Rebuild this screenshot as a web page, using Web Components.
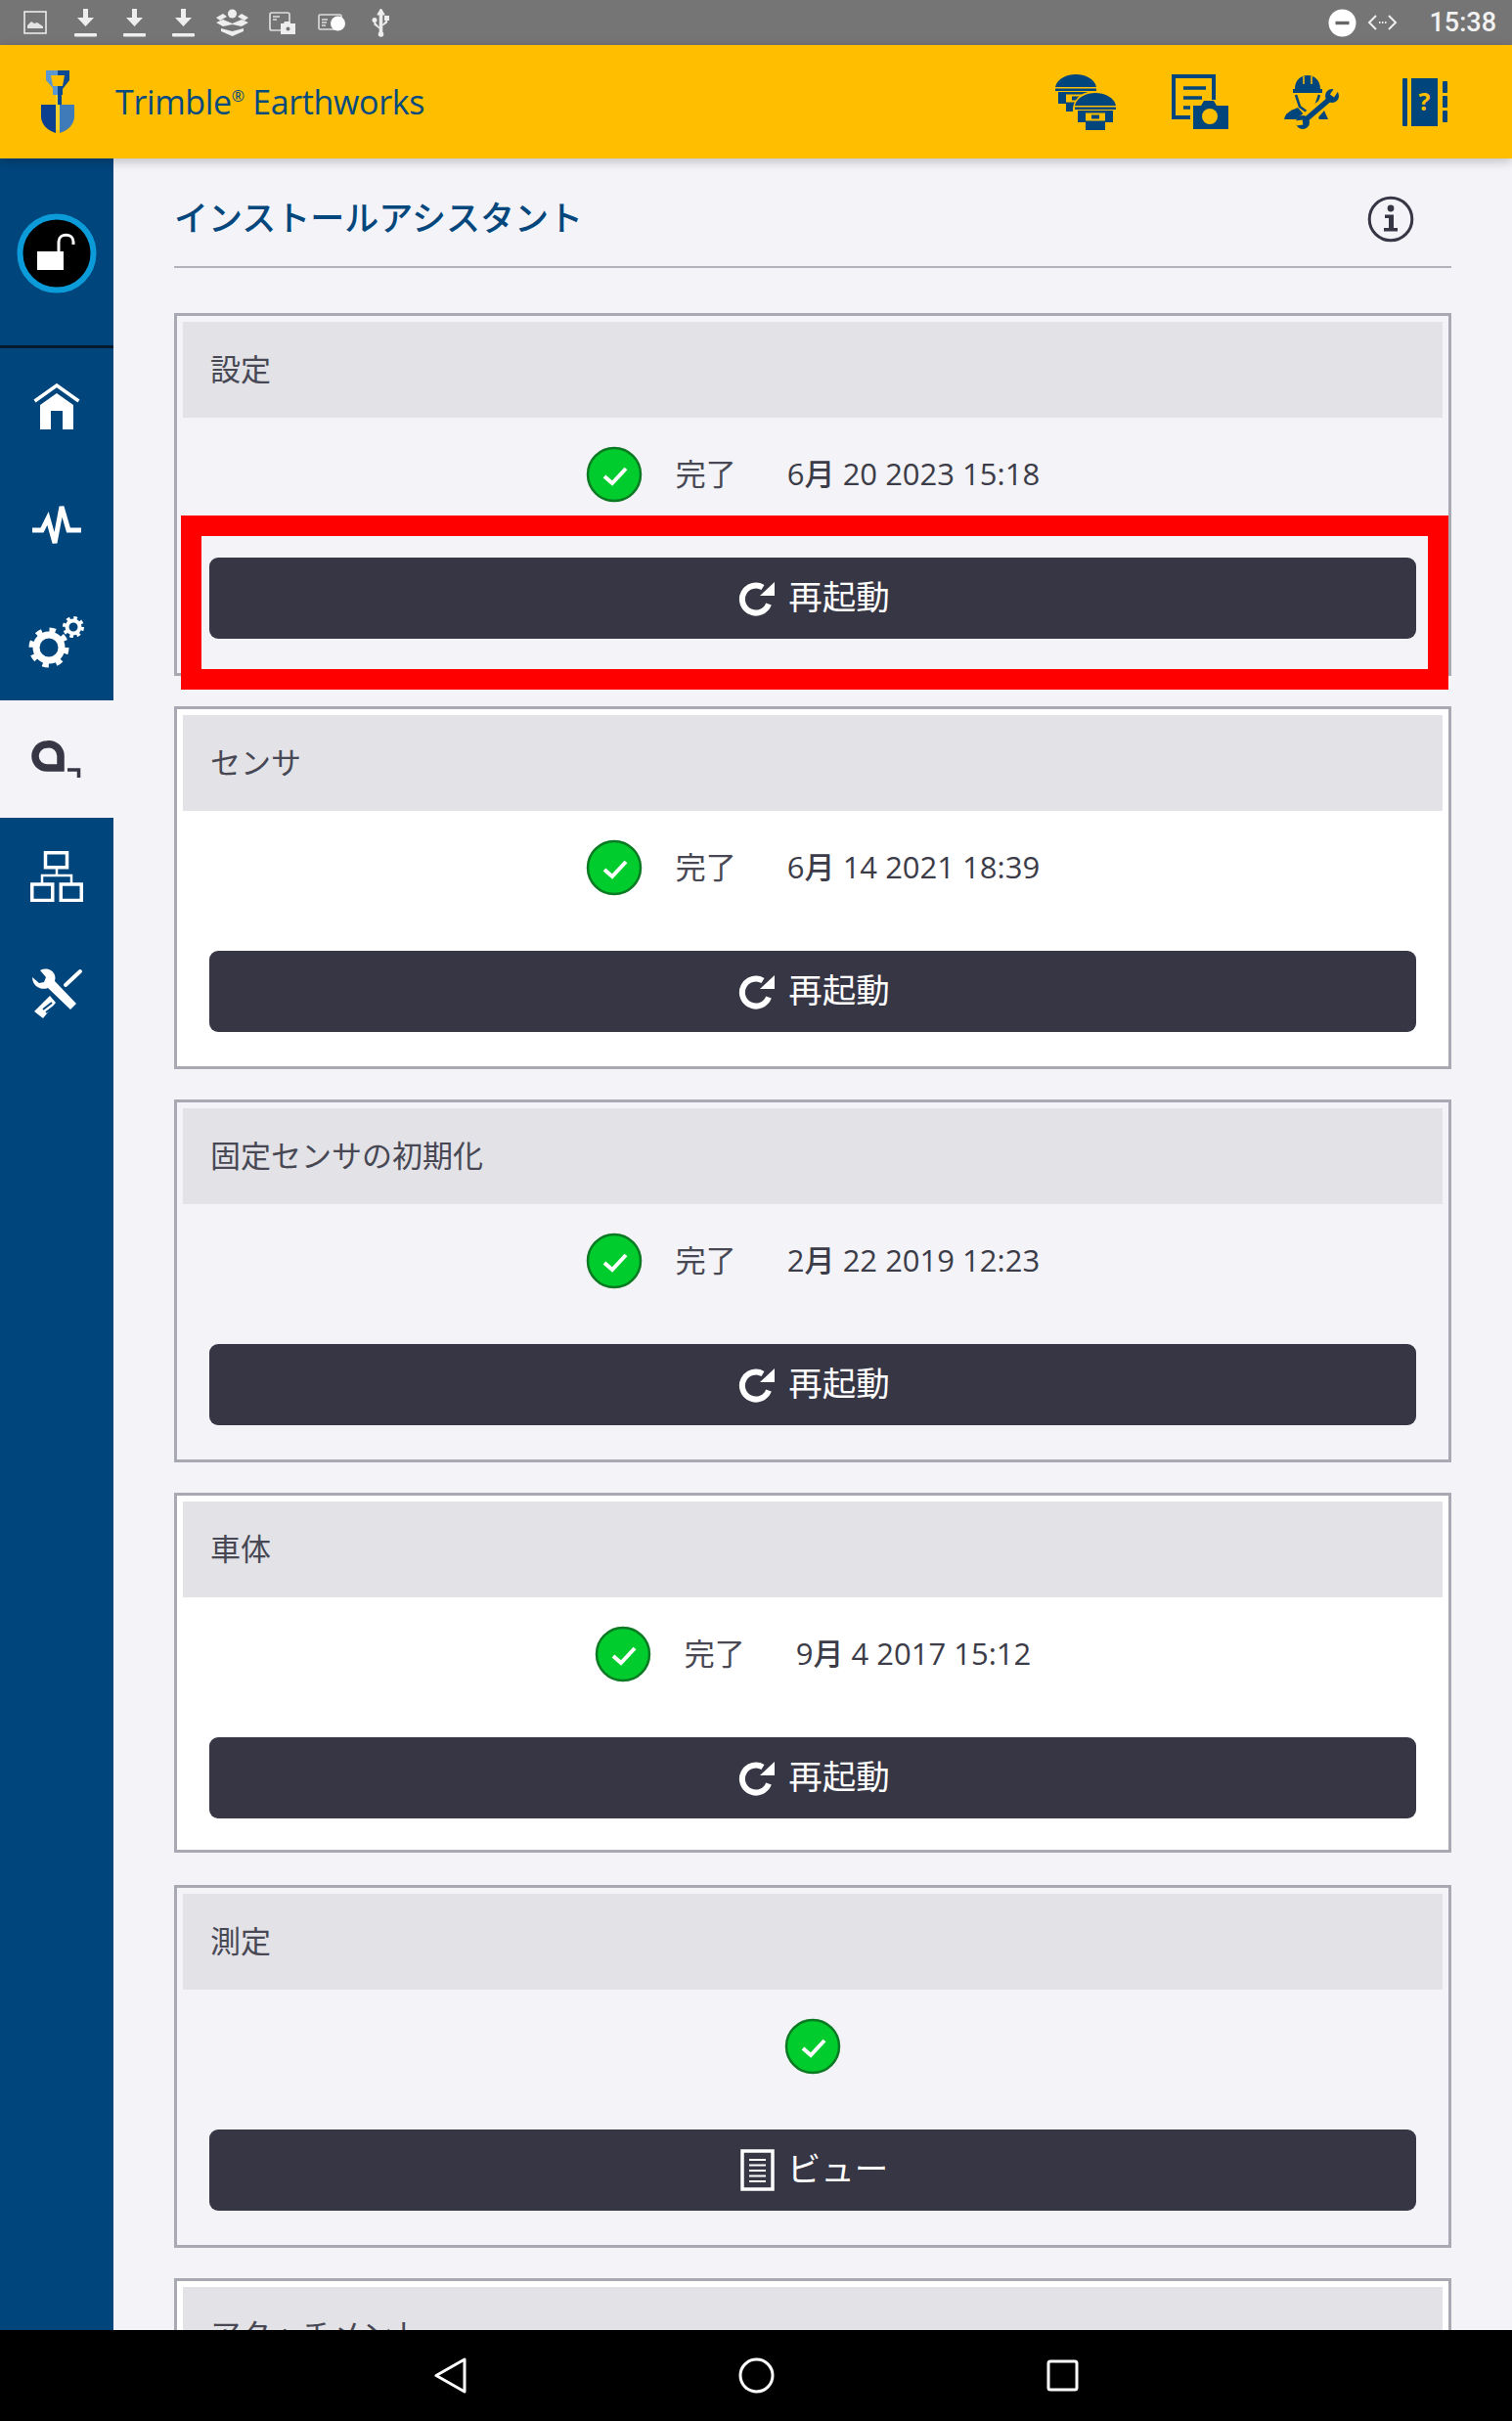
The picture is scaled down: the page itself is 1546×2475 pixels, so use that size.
<!DOCTYPE html>
<html lang="ja">
<head>
<meta charset="utf-8">
<title>Trimble Earthworks</title>
<style>
    html, body { margin: 0; height: 100%; background: #f3f3f8; }
    body {
        display: flex;
        flex-direction: column;
        height: 2475px;
        overflow: hidden;
        font-family: "Open Sans", "Noto Sans CJK JP", sans-serif;
    }
    .middle { flex: 1; display: flex; min-height: 0; }
</style>
</head>
<body>
<status-bar></status-bar>
<app-header></app-header>
<div class="middle">
    <side-rail></side-rail>
    <assistant-page>
        <install-card title="設定" date="6月 20 2023 15:18" action="再起動" highlight></install-card>
        <install-card title="センサ" date="6月 14 2021 18:39" action="再起動" white></install-card>
        <install-card title="固定センサの初期化" date="2月 22 2019 12:23" action="再起動"></install-card>
        <install-card title="車体" date="9月 4 2017 15:12" action="再起動" white short></install-card>
        <install-card title="測定" action="ビュー" icon="view"></install-card>
        <install-card title="アタッチメント" white></install-card>
    </assistant-page>
</div>
<nav-bar></nav-bar>

<script>
const BLUE = '#00457c';
const DARK = '#373645';
const YELLOW = '#ffbf00';

// rover drawn at the origin, 42 wide by 38 high
const rover = `
    <path d="M0 13C2 4 12 0 21 0s19 4 21 13z"/>
    <rect y="14.500" width="42" height="2.500"/>
    <path d="M3 18h36v12h-8v8H11v-8H3z"/>
    <rect x="11" y="20.500" width="20" height="8" fill="${YELLOW}"/>
    <rect x="17" y="22.500" width="8" height="4"/>`;

const ICONS = {
    image: `<svg width="24" height="24" viewBox="0 0 24 24"><rect x="1" y="1" width="22" height="22" fill="none" stroke="#e4e4e4" stroke-width="1.700"/><path d="M4 18v-3l4-4 3 2 3-1 3 2 3 2v2z" fill="#e4e4e4"/></svg>`,
    download: `<svg width="23" height="29" viewBox="0 0 23 29" fill="#eee"><path d="M9 0h5v9h6l-8.500 9L3 9h6z"/><rect y="25" width="23" height="3.500" rx="1"/></svg>`,
    box: `<svg width="33" height="28" viewBox="0 0 33 28" fill="#eee"><circle cx="16.500" cy="5" r="4.500"/><path d="M0 9l7-4 4 3-7 4zM33 9l-7-4-4 3 7 4zM0 14l7-3 9.500 4 9.500-4 7 3-7 4-9.500-2-9.500 2z"/><path d="M5 20l11.500 3L28 20v3l-11.500 5L5 23z"/></svg>`,
    shot: `<svg width="27" height="23" viewBox="0 0 27 23"><rect x="1" y="1" width="20" height="18" rx="2" fill="none" stroke="#ddd" stroke-width="1.700"/><path d="M4 5h7M4 8h4" stroke="#ddd" stroke-width="1.500"/><path d="M12 12h3l1-2h5l1 2h5v11H12z" fill="#eee"/><circle cx="19.500" cy="17.500" r="2" fill="#777"/></svg>`,
    record: `<svg width="28" height="21" viewBox="0 0 28 21"><rect x="1" y="2" width="23" height="15" rx="1.500" fill="none" stroke="#ddd" stroke-width="1.600"/><path d="M4 7h6M4 10h5M4 13h4" stroke="#ddd" stroke-width="1.500"/><circle cx="20.500" cy="11" r="7.500" fill="#fff"/></svg>`,
    usb: `<svg width="21" height="29" viewBox="0 0 21 29"><path d="M10.500 0l3.500 6h-2.300v18h-2.400V6H7zM10.500 21L4 16v-3M10.500 18l6-4v-3" fill="#eee" stroke="#eee" stroke-width="1.200" stroke-linejoin="round"/><circle cx="10.500" cy="26" r="2.800" fill="#eee"/><circle cx="4" cy="11.500" r="2.500" fill="#eee"/><rect x="14" y="7" width="5" height="5" fill="#eee"/></svg>`,
    dnd: `<svg width="29" height="29" viewBox="0 0 29 29"><circle cx="14.500" cy="14.500" r="14" fill="#fff"/><rect x="7.500" y="12.800" width="14" height="3.400" fill="#666"/></svg>`,
    code: `<svg width="31" height="20" viewBox="0 0 31 20" fill="none" stroke="#eee" stroke-width="2"><path d="M9 3l-7 7 7 7M22 3l7 7-7 7"/><path d="M12 10h1.500M15 10h1.500M18 10h1.500"/></svg>`,
    shovel: `<svg width="34" height="66" viewBox="0 0 34 66"><path d="M5 1h12v5h-7l2 11h5v9H12v-7L5 11z" fill="#5c97cf"/><path d="M17 1h12v10l-7 9v6h-5v-9h5l2-11h-7z" fill="#0b4a93"/><path d="M0 36h15v29C6 62 0 56 0 48z" fill="#0b3f8f"/><path d="M19 36h15v12c0 8-6 14-15 17z" fill="#3f7bb8"/><rect x="15" y="26" width="4" height="36" fill="#f3cf2b"/><path d="M17 26h4v10h-4z" fill="#0b4a93"/></svg>`,
    rovers: `<svg width="62" height="57" viewBox="0 0 62 57" fill="${BLUE}"><g>${rover}</g><g transform="translate(20 19)"><path d="M-2 15C0 3 11-2 21-2s21 5 23 17v17H-2z" fill="${YELLOW}"/>${rover}</g></svg>`,
    doccam: `<svg width="58" height="56" viewBox="0 0 58 56"><path d="M19 44H2V2h41v24" fill="none" stroke="${BLUE}" stroke-width="4"/><path d="M12 14h23M12 24h19M12 34h7" stroke="${BLUE}" stroke-width="3.500"/><path d="M22 32h8l3-5h10l3 5h12v24H22z" fill="${BLUE}"/><circle cx="39" cy="43" r="8" fill="${YELLOW}"/></svg>`,
    worker: `<svg width="56" height="56" viewBox="0 0 56 56"><path d="M11 15C11 6 17 1 24 1s13 5 13 14h2v4H9v-4z" fill="${BLUE}"/><path d="M20 2v8M28 2v8" stroke="${YELLOW}" stroke-width="1.500"/><path d="M12 21l4 12 8 6 8-6 4-12" fill="none" stroke="${BLUE}" stroke-width="2.500"/><path d="M0 46c1-6 6-9 14-12l7 8-5 4z" fill="${BLUE}"/><path d="M35 44l6-7 4 9h-9z" fill="${BLUE}"/><path d="M16 50L50 22" stroke="${YELLOW}" stroke-width="11"/><path d="M19 49L48 24" stroke="${BLUE}" stroke-width="5.500"/><circle cx="49" cy="22" r="7" fill="${BLUE}"/><path d="M49 22l6-9" stroke="${YELLOW}" stroke-width="5"/><circle cx="19" cy="49" r="7" fill="${BLUE}"/><path d="M19 49l-7 1" stroke="${YELLOW}" stroke-width="5"/></svg>`,
    book: `<svg width="46" height="49" viewBox="0 0 46 49" fill="${BLUE}" style="margin-left:8px"><rect width="5" height="49" rx="1"/><rect x="9" width="27" height="49"/><rect x="41" y="3" width="5" height="12" rx="1"/><rect x="41" y="18" width="5" height="12" rx="1"/><rect x="41" y="33" width="5" height="12" rx="1"/><text x="22.500" y="33" text-anchor="middle" font-family="Open Sans" font-weight="700" font-size="25" fill="${YELLOW}">?</text></svg>`,
    info: `<svg width="48" height="48" viewBox="0 0 48 48"><circle cx="24" cy="24" r="21.800" fill="none" stroke="${DARK}" stroke-width="3"/><circle cx="24" cy="13" r="3.400" fill="${DARK}"/><path d="M18 19.500h9V33h4v3.500H17V33h5v-10h-4z" fill="${DARK}"/></svg>`,
    lock: `<svg width="82" height="82" viewBox="0 0 82 82"><circle cx="41" cy="41" r="37.500" fill="#000" stroke="#0b9bd9" stroke-width="6"/><rect x="21" y="39" width="27" height="19" fill="#fff"/><path d="M43 39V29c0-9 15-9 15 0v3" fill="none" stroke="#fff" stroke-width="3"/></svg>`,
    home: `<svg width="48" height="48" viewBox="0 0 48 48" fill="#fff"><path d="M1.500 18L24 2l22.500 16" fill="none" stroke="#fff" stroke-width="3.500"/><path d="M7 47V22L24 10l17 12v25H30V28H18v19z"/></svg>`,
    activity: `<svg width="52" height="45" viewBox="0 0 52 45"><path d="M1 28H11L17 16L24 41L31 4L38 28H51" fill="none" stroke="#fff" stroke-width="5"/></svg>`,
    gears: `<svg width="60" height="54" viewBox="0 0 60 54" fill="none" stroke="#fff" style="margin-left:2px"><circle cx="21" cy="33" r="13" stroke-width="7"/><circle cx="21" cy="33" r="17.500" stroke-width="6" stroke-dasharray="6.200 7.540"/><circle cx="46" cy="12" r="6.500" stroke-width="4"/><circle cx="46" cy="12" r="9" stroke-width="4" stroke-dasharray="3.500 3.570"/></svg>`,
    tape: `<svg width="52" height="38" viewBox="0 0 52 38"><path d="M16 4a12 12 0 1 0 0 24h14V16A12 12 0 0 0 16 4z" fill="none" stroke="${DARK}" stroke-width="7.500"/><path d="M37 30h11.500v8" fill="none" stroke="${DARK}" stroke-width="3.500"/></svg>`,
    network: `<svg width="54" height="52" viewBox="0 0 54 52" fill="none" stroke="#fff"><g stroke-width="3.500"><rect x="15.500" y="1.750" width="22" height="15"/><rect x="1.750" y="34" width="21" height="16.500"/><rect x="31.250" y="34" width="21" height="16.500"/></g><path d="M27 17v8M12 34v-9h30v9" stroke-width="2.500"/></svg>`,
    tools: `<svg width="52" height="52" viewBox="0 0 52 52" fill="#fff" style="margin-left:2px"><path d="M0 9l7 6 5-1 2-5-6-7c6-3 13-1 15 5 1 3 0 5 0 6l22 23-6 6-23-22c-7 3-16-2-16-11z"/><path d="M34 17L49 3" stroke="#fff" stroke-width="4" stroke-linecap="round"/><path d="M18 28l6 7-13 16-9-7z"/><path d="M20 35l-9 7M22 39l-8 6" stroke="${BLUE}" stroke-width="2"/></svg>`,
    restart: `<svg width="38" height="38" viewBox="0 0 38 38"><path d="M31 24.500A14 14 0 1 1 25 7.500" fill="none" stroke="#fff" stroke-width="6"/><path d="M22 16h15V2z" fill="#fff"/></svg>`,
    view: `<svg width="35" height="43" viewBox="0 0 35 43" fill="none" stroke="#fff"><rect x="2" y="2" width="31" height="39" stroke-width="3.500"/><path d="M9 11h17M9 16.500h17M9 22h17M9 27.500h17M9 33h17" stroke-width="2.200"/></svg>`,
    back: `<svg width="33" height="37" viewBox="0 0 33 37"><path d="M31 2v33L2 18.500z" fill="none" stroke="#fff" stroke-width="3" stroke-linejoin="round"/></svg>`,
    circle: `<svg width="37" height="37" viewBox="0 0 37 37"><circle cx="18.500" cy="18.500" r="16.500" fill="none" stroke="#fff" stroke-width="3"/></svg>`,
    square: `<svg width="33" height="33" viewBox="0 0 33 33"><rect x="2" y="2" width="29" height="29" rx="2" fill="none" stroke="#fff" stroke-width="3"/></svg>`
};

class StatusBar extends HTMLElement {
    constructor() {
        super();
        this.attachShadow({ mode: 'open' });
        this.shadowRoot.innerHTML = `
            <style>
                :host {
                    display: flex;
                    flex: none;
                    align-items: center;
                    height: 46px;
                    background: #757575;
                    color: #f2f2f2;
                    padding: 0 16px 0 24px;
                    font: 500 27px Roboto, sans-serif;
                }
                .left { display: flex; align-items: center; flex: 1; }
                .left span { display: flex; }
                .right { display: flex; align-items: center; }
                svg { display: block; }
            </style>
            <div class="left">
                <span style="margin-right:28px">${ICONS.image}</span>
                <span style="margin-right:27px">${ICONS.download}</span>
                <span style="margin-right:27px">${ICONS.download}</span>
                <span style="margin-right:22px">${ICONS.download}</span>
                <span style="margin-right:21px">${ICONS.box}</span>
                <span style="margin-right:23px">${ICONS.shot}</span>
                <span style="margin-right:26px">${ICONS.record}</span>
                <span>${ICONS.usb}</span>
            </div>
            <div class="right">
                ${ICONS.dnd}
                <span style="margin:0 32px 0 11px">${ICONS.code}</span>
                <span>15:38</span>
            </div>`;
    }
}

class AppHeader extends HTMLElement {
    constructor() {
        super();
        this.attachShadow({ mode: 'open' });
        this.shadowRoot.innerHTML = `
            <style>
                :host {
                    display: flex;
                    flex: none;
                    align-items: center;
                    position: relative;
                    z-index: 2;
                    height: 116px;
                    background: ${YELLOW};
                    box-shadow: 0 3px 10px rgba(0, 0, 0, 0.22);
                    padding: 0 66px 0 42px;
                }
                .brand {
                    flex: 1;
                    margin-left: 42px;
                    color: #044a7f;
                    font: 400 34px "Open Sans", sans-serif;
                    letter-spacing: -0.35px;
                }
                sup { font-size: 16px; line-height: 0; vertical-align: 13px; }
                .icons { display: flex; align-items: center; gap: 57px; }
                svg { display: block; }
            </style>
            ${ICONS.shovel}
            <div class="brand">Trimble<sup>®</sup> Earthworks</div>
            <div class="icons">
                ${ICONS.rovers}
                ${ICONS.doccam}
                ${ICONS.worker}
                ${ICONS.book}
            </div>`;
    }
}

class RailItem extends HTMLElement {
    constructor() {
        super();
        this.attachShadow({ mode: 'open' });
    }

    connectedCallback() {
        this.shadowRoot.innerHTML = `
            <style>
                :host {
                    display: flex;
                    align-items: center;
                    justify-content: center;
                    height: 120px;
                }
                :host([active]) { background: #f3f3f8; }
                svg { display: block; }
            </style>
            ${ICONS[this.getAttribute('icon')]}`;
    }
}

class SideRail extends HTMLElement {
    constructor() {
        super();
        this.attachShadow({ mode: 'open' });
        this.shadowRoot.innerHTML = `
            <style>
                :host {
                    display: block;
                    flex: none;
                    width: 116px;
                    background: ${BLUE};
                }
                .top {
                    display: flex;
                    justify-content: center;
                    padding-top: 56px;
                    height: 135px;
                    border-bottom: 3px solid #04192b;
                }
                svg { display: block; }
            </style>
            <div class="top">${ICONS.lock}</div>
            <rail-item icon="home"></rail-item>
            <rail-item icon="activity"></rail-item>
            <rail-item icon="gears"></rail-item>
            <rail-item icon="tape" active></rail-item>
            <rail-item icon="network"></rail-item>
            <rail-item icon="tools"></rail-item>`;
    }
}

class AssistantPage extends HTMLElement {
    constructor() {
        super();
        this.attachShadow({ mode: 'open' });
        this.shadowRoot.innerHTML = `
            <style>
                :host {
                    display: block;
                    flex: 1;
                    min-width: 0;
                    overflow: hidden;
                    padding: 0 62px;
                    background: #f3f3f8;
                }
                .title {
                    display: flex;
                    align-items: center;
                    justify-content: space-between;
                    box-sizing: border-box;
                    height: 112px;
                    padding: 10px 38px 0 0;
                    border-bottom: 2px solid #b2b2ba;
                    margin-bottom: 46px;
                    color: #04477d;
                    font: 500 35px "Noto Sans CJK JP", sans-serif;
                }
                .title span { margin-bottom: 3px; }
                .title svg { margin-top: 3px; }
                .list { display: flex; flex-direction: column; gap: 31px; }
                svg { display: block; }
            </style>
            <div class="title"><span>インストールアシスタント</span>${ICONS.info}</div>
            <div class="list"><slot></slot></div>`;
    }
}

class InstallCard extends HTMLElement {
    constructor() {
        super();
        this.attachShadow({ mode: 'open' });
    }

    connectedCallback() {
        const date = this.getAttribute('date');
        const action = this.getAttribute('action');
        const icon = this.getAttribute('icon') || 'restart';
        this.shadowRoot.innerHTML = `
            <style>
                :host {
                    display: block;
                    flex: none;
                    position: relative;
                    box-sizing: border-box;
                    height: 371px;
                    padding: 6px;
                    border: 3px solid #a9a9b3;
                    background: #f3f3f8;
                    color: #484854;
                    font: 400 31px "Open Sans", "Noto Sans CJK JP", sans-serif;
                }
                :host([white]) { background: #fff; }
                :host([short]) { height: 368px; margin-bottom: 2px; }
                .head {
                    display: flex;
                    align-items: center;
                    box-sizing: border-box;
                    height: 98px;
                    padding: 0 0 5px 28px;
                    background: #e2e2e7;
                }
                .state {
                    display: flex;
                    align-items: center;
                    justify-content: center;
                    height: 116px;
                }
                .state span { margin-bottom: 5px; }
                .state .done { margin-left: 34px; }
                .state .date { margin-left: 52px; font-weight: 500; color: #3c3c48; }
                button {
                    display: flex;
                    align-items: center;
                    justify-content: center;
                    gap: 13px;
                    box-sizing: border-box;
                    width: 1234px;
                    height: 83px;
                    margin: 27px 0 0 27px;
                    padding: 0 0 0 3px;
                    border: 0;
                    border-radius: 9px;
                    background: ${DARK};
                    color: #fff;
                    font: 400 34.500px "Noto Sans CJK JP", sans-serif;
                }
                button span { position: relative; top: -4px; }
                .mark {
                    position: absolute;
                    left: 4px;
                    top: 204px;
                    box-sizing: border-box;
                    width: 1296px;
                    height: 178px;
                    border: 21px solid #ff0000;
                }
                svg { display: block; }
            </style>
            <div class="head">${this.getAttribute('title')}</div>
            <div class="state">
                <svg width="58" height="58" viewBox="0 0 58 58">
                    <circle cx="29" cy="29" r="27" fill="#00cc2e" stroke="#0c7a22" stroke-width="2.500"/>
                    <path d="M19 31l8 7 14-15" fill="none" stroke="#fff" stroke-width="4"/>
                </svg>
                ${date ? `<span class="done">完了</span><span class="date">${date}</span>` : ''}
            </div>
            ${action ? `<button>${ICONS[icon]}<span>${action}</span></button>` : ''}
            ${this.hasAttribute('highlight') ? '<div class="mark"></div>' : ''}`;
    }
}

class NavBar extends HTMLElement {
    constructor() {
        super();
        this.attachShadow({ mode: 'open' });
        this.shadowRoot.innerHTML = `
            <style>
                :host {
                    display: flex;
                    flex: none;
                    position: relative;
                    z-index: 3;
                    align-items: center;
                    justify-content: center;
                    gap: 278px;
                    height: 93px;
                    background: #000;
                }
                svg { display: block; }
            </style>
            ${ICONS.back}
            ${ICONS.circle}
            ${ICONS.square}`;
    }
}

customElements.define('status-bar', StatusBar);
customElements.define('app-header', AppHeader);
customElements.define('rail-item', RailItem);
customElements.define('side-rail', SideRail);
customElements.define('assistant-page', AssistantPage);
customElements.define('install-card', InstallCard);
customElements.define('nav-bar', NavBar);
</script>
</body>
</html>
